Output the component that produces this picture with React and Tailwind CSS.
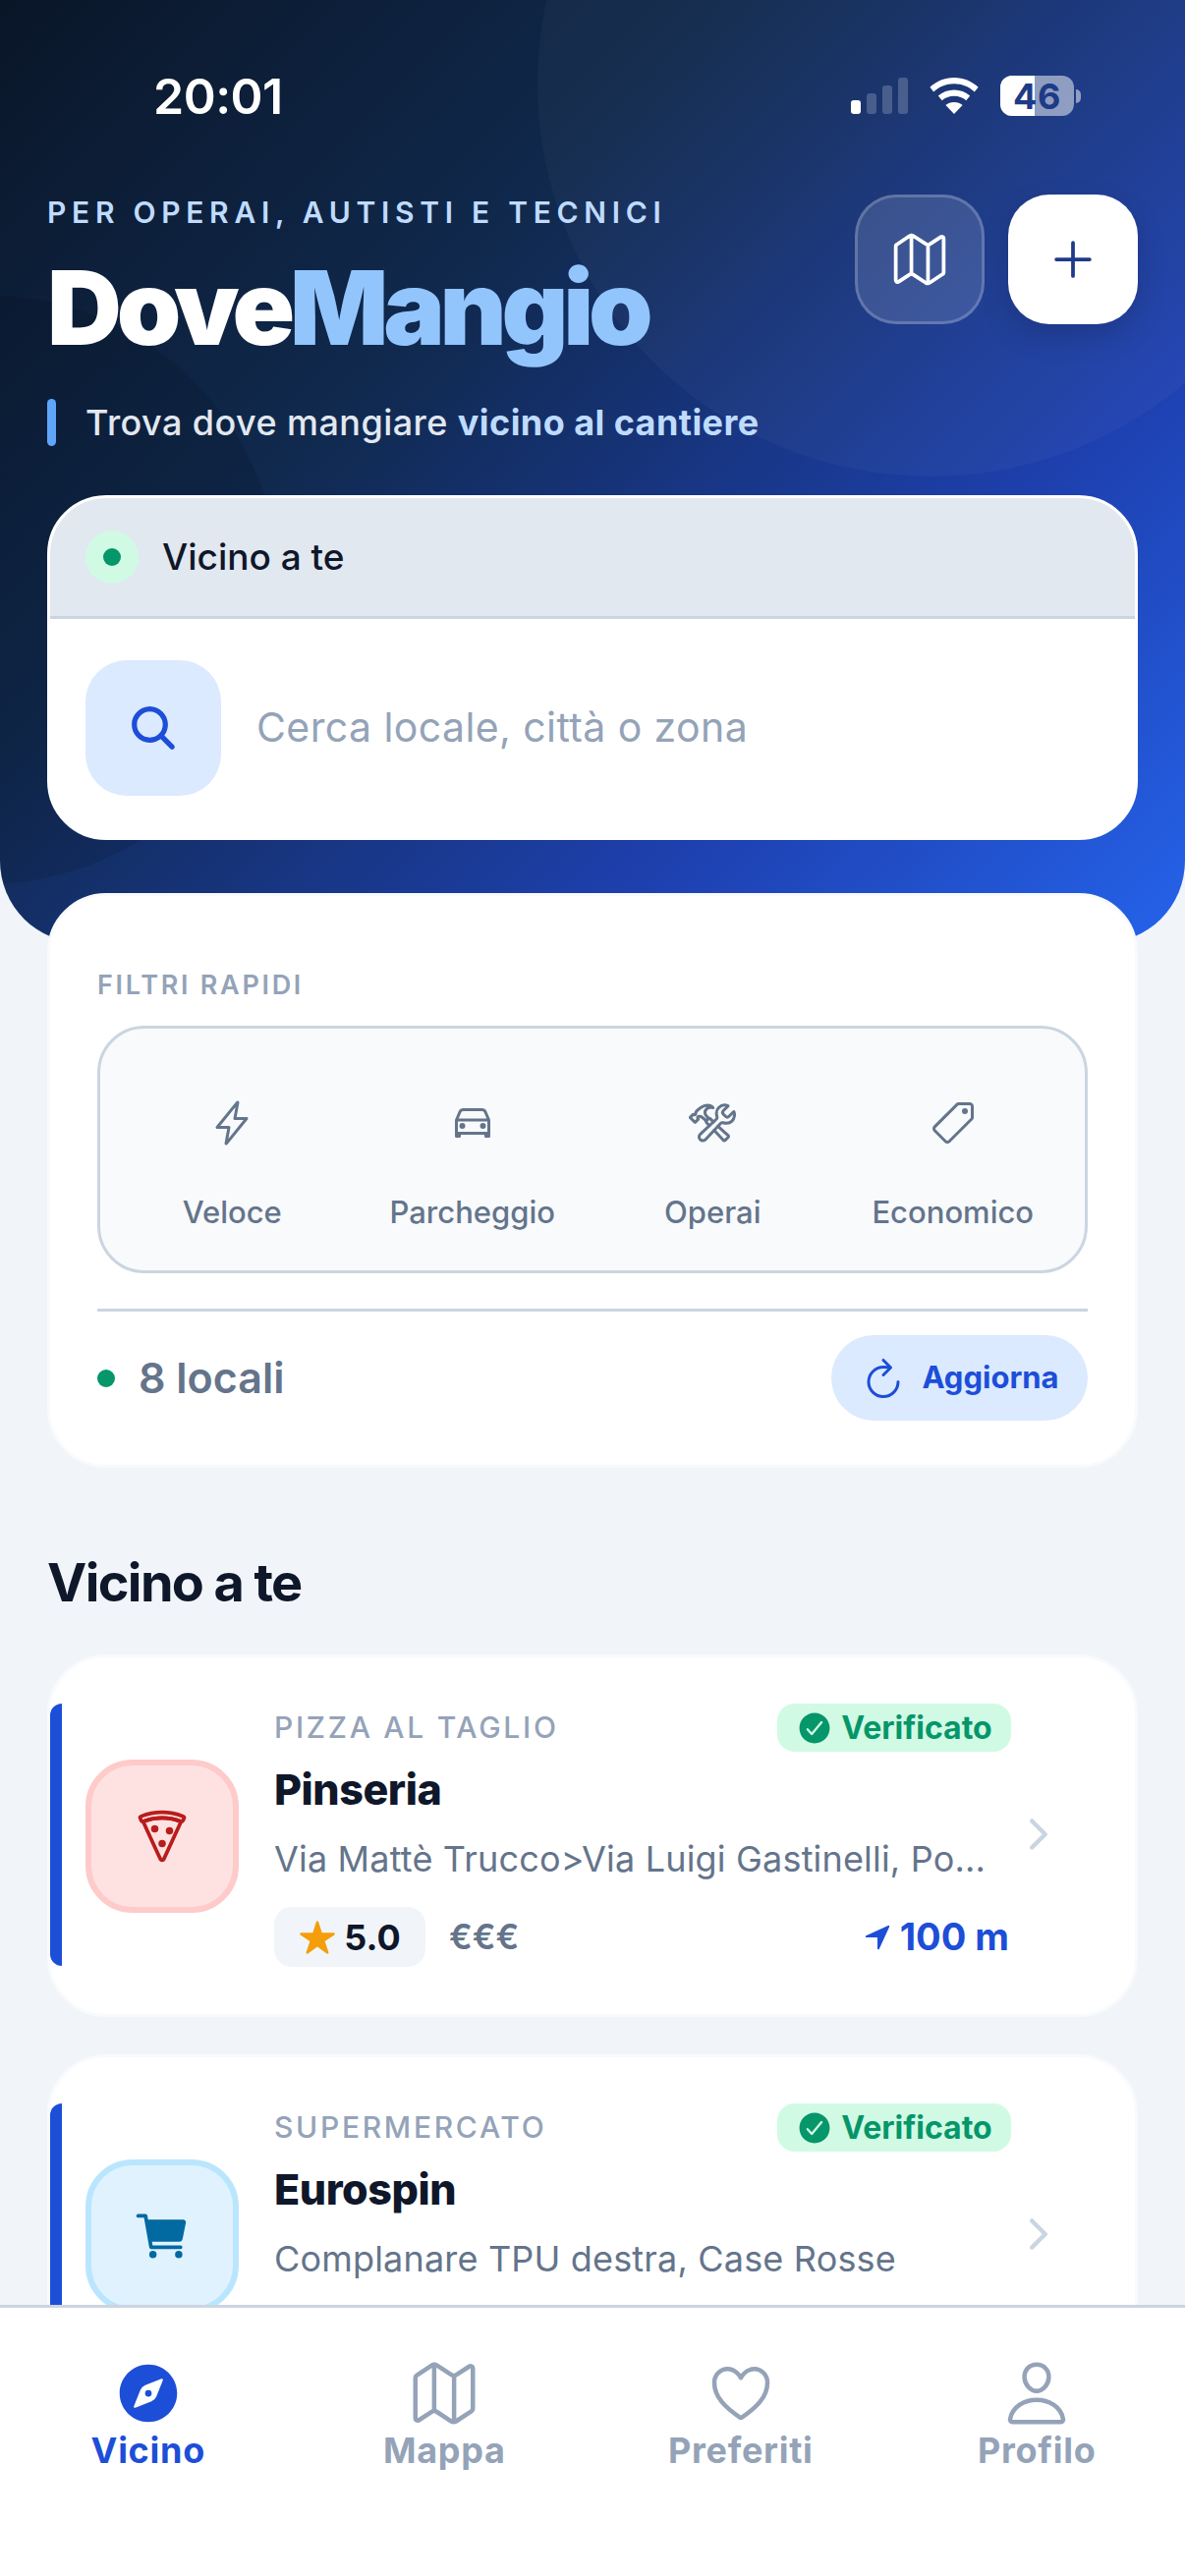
import React from 'react';
import {
  IoMapOutline, IoAdd, IoSearch, IoFlashOutline, IoCarOutline, IoConstructOutline,
  IoPricetagOutline, IoRefreshOutline, IoPizzaOutline, IoCart, IoStar, IoNavigate, IoCheckmarkCircle,
  IoChevronForward, IoCompass, IoHeartOutline, IoPersonOutline,
} from 'react-icons/io5';

const filters = [
  { label: 'Veloce', Icon: IoFlashOutline },
  { label: 'Parcheggio', Icon: IoCarOutline },
  { label: 'Operai', Icon: IoConstructOutline },
  { label: 'Economico', Icon: IoPricetagOutline },
];

const tabs = [
  { label: 'Mappa', Icon: IoMapOutline },
  { label: 'Preferiti', Icon: IoHeartOutline },
  { label: 'Profilo', Icon: IoPersonOutline },
];

function StatusIcons() {
  return (
    <div className="flex items-center gap-[22px]">
      <svg width="58" height="37" viewBox="0 0 58 37" className="block">
        <rect x="0" y="23" width="10" height="14" rx="3" fill="#fff" />
        <rect x="16" y="16" width="10" height="21" rx="3" fill="#fff" fillOpacity="0.2" />
        <rect x="32" y="8" width="10" height="29" rx="3" fill="#fff" fillOpacity="0.2" />
        <rect x="48" y="0" width="10" height="37" rx="3" fill="#fff" fillOpacity="0.2" />
      </svg>
      <svg width="50" height="37" viewBox="0 0 50 37" className="block">
        <path d="M25 0C15.5 0 7 3.7 0.4 9.7L4.2 14.4C9.7 9.3 17 6.2 25 6.2s15.3 3.1 20.8 8.2l3.8-4.7C43 3.7 34.500 0 25 0z" fill="#fff" />
        <path d="M25 12.500c-6.200 0-11.800 2.300-16.200 6.100l3.900 4.700c3.300-2.800 7.600-4.500 12.300-4.500s9 1.700 12.300 4.500l3.900-4.700c-4.400-3.800-10-6.100-16.200-6.100z" fill="#fff" />
        <path d="M25 25c-3.300 0-6.300 1.100-8.600 3.100L25 37l8.600-8.900C31.300 26.100 28.300 25 25 25z" fill="#fff" />
      </svg>
      <div className="flex items-center gap-[2px]">
        <div className="relative w-[75px] h-[41px] rounded-[12px] overflow-hidden bg-white/50 flex items-center justify-center">
          <div className="absolute left-0 top-0 bottom-0 w-[35px] bg-white" />
          <span className="relative text-[36px] font-bold text-[#1d3b87] leading-none tracking-[0.02em]">46</span>
        </div>
        <div className="w-[5px] h-[14px] rounded-r-full bg-white/50" />
      </div>
    </div>
  );
}

function Hero() {
  return (
    <div className="relative h-[960px] rounded-b-[84px] overflow-hidden bg-[linear-gradient(135deg,#0a1628_0%,#10294d_35%,#1e40af_72%,#2563eb_100%)]">
      <div className="absolute left-[547px] top-[-315px] w-[800px] h-[800px] rounded-full bg-white/[0.03]" />
      <div className="absolute left-[-315px] top-[300px] w-[600px] h-[600px] rounded-full bg-black/[0.10]" />

      <div className="relative px-[48px]">
        <div className="flex items-center justify-between h-[198px] pl-[108px] pr-[58px] pb-[3px]">
          <span className="text-[50px] leading-none font-semibold text-white tracking-[-0.01em]">20:01</span>
          <StatusIcons />
        </div>

        <div className="flex items-start justify-between">
          <div>
            <div className="text-[30px] leading-[36px] font-semibold tracking-[0.19em] text-[#bfdbfe]">PER OPERAI, AUTISTI E TECNICI</div>
            <div className="text-[105px] leading-[112px] font-black tracking-[-0.05em] text-white mt-[23px]">
              Dove<span className="text-[#93c5fd]">Mangio</span>
            </div>
            <div className="flex items-center gap-[30px] mt-[37px]">
              <div className="w-[9px] h-[48px] rounded-full bg-[#60a5fa]" />
              <div className="text-[36px] leading-[48px] font-medium text-[#e2e8f0] tracking-[0.012em] whitespace-nowrap">
                Trova dove mangiare <span className="font-bold text-[#bfdbfe]">vicino al cantiere</span>
              </div>
            </div>
          </div>
          <div className="flex gap-[24px]">
            <div className="w-[132px] h-[132px] rounded-[42px] bg-white/[0.13] border-[3px] border-white/20 flex items-center justify-center">
              <IoMapOutline className="text-white text-[60px]" />
            </div>
            <div className="w-[132px] h-[132px] rounded-[42px] bg-white flex items-center justify-center shadow-[0_12px_30px_rgba(0,0,0,0.15)]">
              <IoAdd className="text-[#1e3a8a] text-[60px]" />
            </div>
          </div>
        </div>

        <div className="mt-[50px] rounded-[60px] bg-white border-[3px] border-white overflow-hidden">
          <div className="h-[123px] bg-[#e2e8f0] border-b-[3px] border-[#cbd5e1] flex items-center gap-[24px] px-[36px]">
            <div className="w-[54px] h-[54px] rounded-full bg-[#d1fae5] flex items-center justify-center">
              <div className="w-[18px] h-[18px] rounded-full bg-[#059669]" />
            </div>
            <span className="text-[37px] font-medium text-[#0f172a]">Vicino a te</span>
          </div>
          <div className="h-[222px] flex items-center gap-[36px] px-[36px]">
            <div className="w-[138px] h-[138px] rounded-[42px] bg-[#dbeafe] flex items-center justify-center">
              <IoSearch className="text-[#1d4ed8] text-[54px]" />
            </div>
            <span className="text-[41px] text-[#94a3b8] tracking-[0.01em]">Cerca locale, città o zona</span>
          </div>
        </div>
      </div>
    </div>
  );
}

function Filters() {
  return (
    <div className="relative mx-[48px] mt-[-51px] h-[585px] rounded-[60px] bg-white border-[3px] border-[#f8fafc] px-[48px] pt-[73px]">
      <div className="text-[27px] leading-[36px] font-semibold tracking-[0.1em] text-[#94a3b8]">FILTRI RAPIDI</div>
      <div className="mt-[23px] h-[252px] rounded-[48px] bg-[#f8fafc] border-[3px] border-[#cbd5e1] grid grid-cols-4 px-[12px]">
        {filters.map(({ label, Icon }) => (
          <div key={label} className="flex flex-col items-center pt-[72px]">
            <Icon className="text-[#64748b] text-[48px]" />
            <span className="mt-[47px] text-[31px] leading-[40px] font-medium text-[#64748b]">{label}</span>
          </div>
        ))}
      </div>
      <div className="mt-[36px] border-t-[3px] border-[#cbd5e1] pt-[24px] flex items-center justify-between">
        <div className="flex items-center gap-[24px]">
          <div className="w-[18px] h-[18px] rounded-full bg-[#059669]" />
          <span className="text-[43px] font-semibold text-[#64748b]">8 locali</span>
        </div>
        <div className="w-[261px] h-[87px] rounded-full bg-[#dbeafe] flex items-center justify-center gap-[15px]">
          <IoRefreshOutline className="text-[#1d4ed8] text-[48px]" />
          <span className="text-[31px] font-bold text-[#1d4ed8]">Aggiorna</span>
        </div>
      </div>
    </div>
  );
}

function PlaceCard({ category, name, address, Icon, box, iconColor, children }) {
  return (
    <div className="h-[369px] rounded-[60px] bg-white border-[3px] border-[#f8fafc] flex items-center relative">
      <div className="absolute left-0 top-[47px] w-[12px] h-[267px] rounded-l-[12px] bg-[#1d4ed8]" />
      <div className={`ml-[36px] w-[156px] h-[156px] rounded-[48px] border-[6px] flex items-center justify-center shrink-0 ${box}`}>
        <Icon className={`text-[60px] ${iconColor}`} />
      </div>
      <div className="ml-[36px] w-[750px] self-start pt-[47px]">
        <div className="flex items-center justify-between h-[49px]">
          <span className="text-[30px] font-medium tracking-[0.09em] text-[#94a3b8]">{category}</span>
          <div className="h-[49px] w-[238px] rounded-[18px] bg-[#d1fae5] flex items-center justify-center gap-[8px]">
            <IoCheckmarkCircle className="text-[#059669] text-[38px]" />
            <span className="text-[32px] font-bold text-[#059669]">Verificato</span>
          </div>
        </div>
        <div className="mt-[12px] text-[43px] leading-[52px] font-extrabold text-[#0f172a] tracking-[-0.01em]">{name}</div>
        <div className="mt-[21px] text-[36px] leading-[48px] text-[#64748b] tracking-[0.005em] whitespace-nowrap">{address}</div>
        {children}
      </div>
      <IoChevronForward className="absolute left-[982px] top-[156px] text-[#cbd5e1] text-[48px]" />
    </div>
  );
}

function NavBar() {
  return (
    <div className="h-[276px] shrink-0 bg-white border-t-[3px] border-[#cbd5e1] grid grid-cols-4 pt-[51px]">
      <div className="flex flex-col items-center">
        <IoCompass className="text-[#1d4ed8] text-[72px] mb-[-2px]" />
        <span className="text-[36px] leading-[48px] font-bold text-[#1d4ed8] tracking-[0.02em]">Vicino</span>
      </div>
      {tabs.map(({ label, Icon }) => (
        <div key={label} className="flex flex-col items-center">
          <Icon className="text-[#94a3b8] text-[72px] mb-[-2px]" />
          <span className="text-[36px] leading-[48px] font-bold text-[#94a3b8] tracking-[0.02em]">{label}</span>
        </div>
      ))}
    </div>
  );
}

export default function App() {
  return (
    <div className="w-[1206px] h-[2622px] overflow-hidden flex flex-col bg-[#f1f5f9] font-['Inter',sans-serif]">
      <div className="flex-1 min-h-0 overflow-hidden">
        <Hero />
        <Filters />
        <h2 className="ml-[48px] mt-[82px] text-[54px] leading-[70px] font-bold text-[#0f172a] tracking-[-0.03em]">Vicino a te</h2>
        <div className="mx-[48px] mt-[38px] flex flex-col gap-[38px]">
          <PlaceCard
            category="PIZZA AL TAGLIO"
            name="Pinseria"
            address="Via Mattè Trucco>Via Luigi Gastinelli, Po..."
            Icon={IoPizzaOutline}
            box="bg-[#fee2e2] border-[#fecaca]"
            iconColor="text-[#b91c1c]"
          >
            <div className="mt-[25px] flex items-center">
              <div className="h-[61px] w-[154px] rounded-[18px] bg-[#f1f5f9] flex items-center justify-center gap-[8px]">
                <IoStar className="text-[#f59e0b] text-[38px]" />
                <span className="text-[36px] font-bold text-[#0f172a]">5.0</span>
              </div>
              <span className="ml-[24px] text-[35px] font-semibold text-[#64748b]">€€€</span>
              <div className="ml-auto flex items-center gap-[8px] pr-[2px]">
                <IoNavigate className="text-[#1d4ed8] text-[30px]" />
                <span className="text-[38px] font-bold text-[#1d4ed8]">100 m</span>
              </div>
            </div>
          </PlaceCard>
          <PlaceCard
            category="SUPERMERCATO"
            name="Eurospin"
            address="Complanare TPU destra, Case Rosse"
            Icon={IoCart}
            box="bg-[#e0f2fe] border-[#bae6fd]"
            iconColor="text-[#0369a1]"
          />
        </div>
      </div>
      <NavBar />
    </div>
  );
}
